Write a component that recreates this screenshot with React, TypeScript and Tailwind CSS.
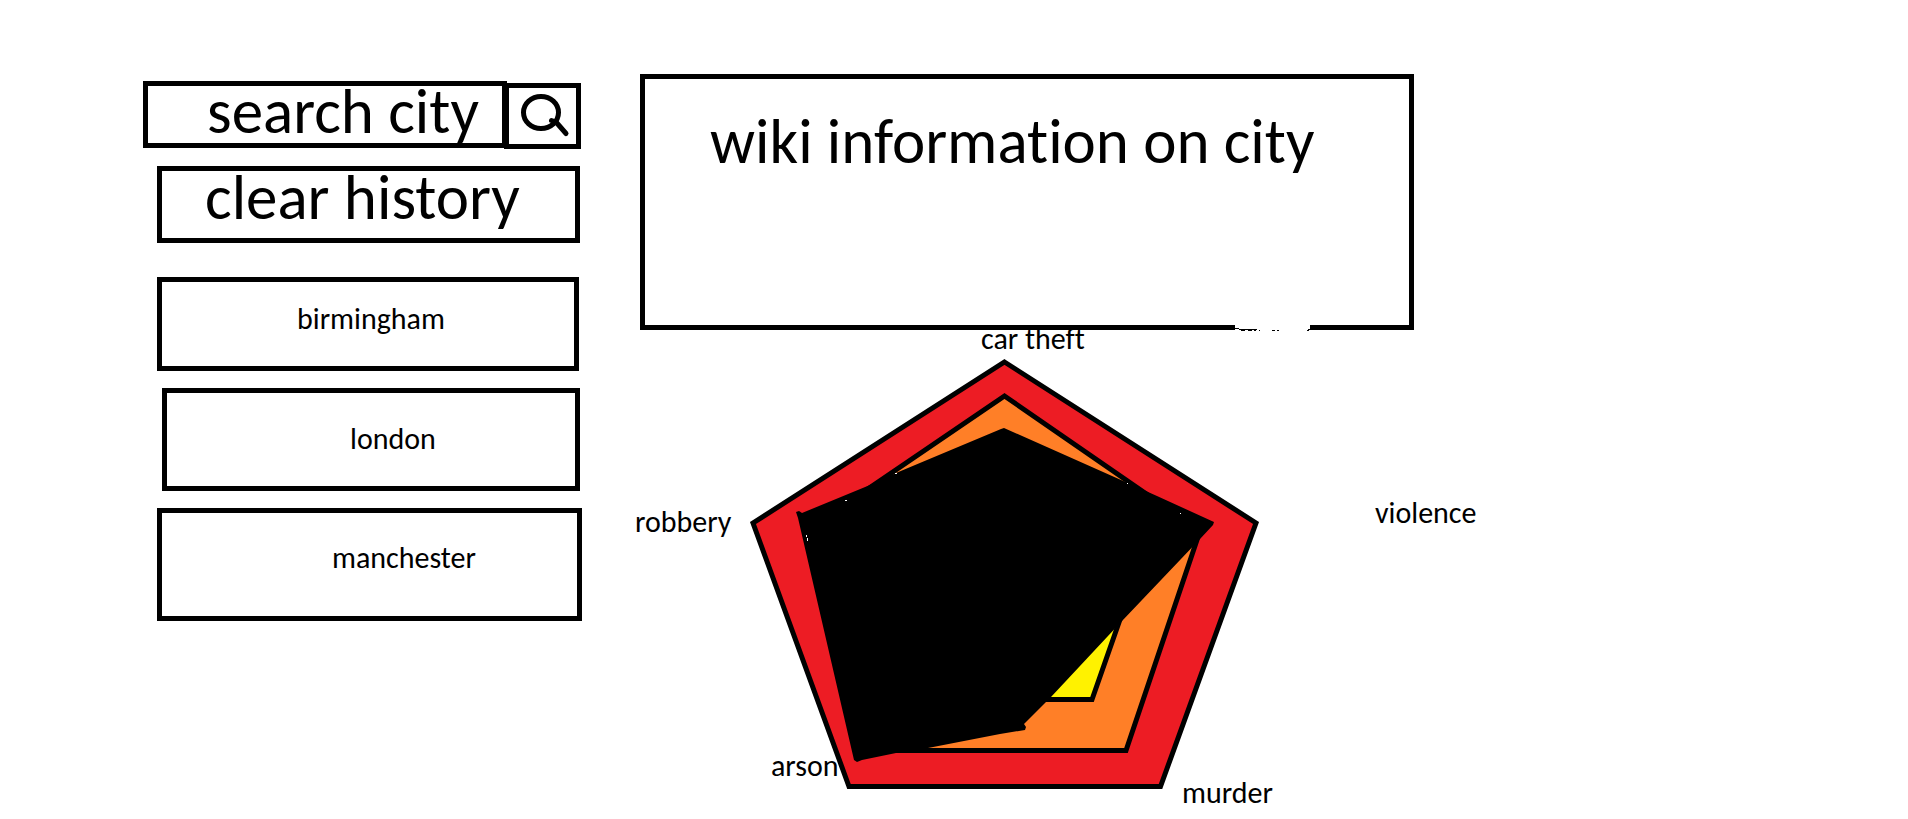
import { useState } from "react";

type City = { name: string; box: string };

const cities: City[] = [
  { name: "birmingham", box: "min-h-[94px] pt-[22px] pl-[135px] mr-[3px]" },
  { name: "london", box: "min-h-[103px] pt-[31px] pl-[183px] ml-[5px] mr-[2px]" },
  { name: "manchester", box: "min-h-[113px] pt-[30px] pl-[170px]" },
];

const labels = [
  { text: "car theft", x: 981, y: 349 },
  { text: "robbery", x: 635, y: 532 },
  { text: "violence", x: 1375, y: 523 },
  { text: "arson", x: 771, y: 776 },
  { text: "murder", x: 1182, y: 803 },
];

function SearchIcon() {
  return (
    <svg viewBox="0 0 67 56" className="h-[56px] w-[67px]" fill="none" stroke="#000" aria-hidden="true">
      <ellipse cx="32" cy="24.5" rx="17.5" ry="16" strokeWidth="5" />
      <path d="M42.500 32.500L47 34L57 45.500" strokeWidth="5" strokeLinecap="round" strokeLinejoin="round" />
    </svg>
  );
}

function CrimeChart() {
  return (
    <svg viewBox="640 330 774 489" className="block h-auto w-full overflow-visible" role="img" aria-label="Crime chart">
      <g stroke="#000" strokeWidth="5">
        <polygon points="1004.500,362 1256,523 1160.500,786.500 849,786.500 753,523" fill="#ed1c24" />
        <polygon points="1004.500,396 1200,531 1126,750.500 880,750.500 812,527" fill="#ff7f27" />
        <polygon points="1004,500 1124,608 1092,699.500 920,699.500 880,600" fill="#fff200" />
      </g>
      <path
        d="M1001 429L1004 428L1157 496L1214 522L1213 525L1200 539L1122 621L1051 697L1024 724L1026 727L1025 730L1000 734L928 748L896 753L862 760L857 762L854 760L798 518L796 512L799 511L802 513L870 485L896 473Z"
        fill="#000"
      />
      <path d="M845 500.500h2M895 473.500h2M806.500 535v2M807.500 538v3M1180 513.500h1M1127 483.500h1" stroke="#fff" />
      <g fontSize="30" fill="#000">
        {labels.map((l) => (
          <text key={l.text} x={l.x} y={l.y}>
            {l.text}
          </text>
        ))}
      </g>
    </svg>
  );
}

export default function App() {
  const [query, setQuery] = useState("search city");

  return (
    <main className="grid grid-cols-[minmax(0,143fr)_minmax(0,439fr)_minmax(0,58fr)_minmax(0,774fr)_minmax(0,494fr)] items-start bg-white font-[Calibri,Carlito,Lato,sans-serif] text-black [font-variant-ligatures:none]">
      <aside className="col-start-2 pt-[81px]">
        <form className="flex items-start" onSubmit={(e) => e.preventDefault()}>
          <input
            aria-label="search city"
            value={query}
            onChange={(e) => setQuery(e.target.value)}
            className="h-[67px] min-w-0 flex-1 border-[5px] border-black pb-[6px] pl-[59px] text-[63px] leading-[52px] outline-none"
          />
          <button
            type="submit"
            aria-label="search"
            className="-ml-[3px] mt-[2px] mr-px h-[66px] w-[77px] border-[5px] border-black bg-white"
          >
            <SearchIcon />
          </button>
        </form>
        <div className="pl-[14px]">
          <div className="mt-[17px] flex pr-[2px]">
            <button
              type="button"
              onClick={() => setQuery("")}
              className="flex h-[77px] flex-1 items-start border-[5px] border-black pt-px pl-[43px] text-[63px] leading-[52px] whitespace-nowrap"
            >
              clear history
            </button>
          </div>
          <ul className="mt-[34px] flex flex-col gap-[17px]">
            {cities.map((c) => (
              <li key={c.name} className="flex">
                <button
                  type="button"
                  className={`flex flex-1 items-start border-[5px] border-black text-[30px] leading-[30px] ${c.box}`}
                >
                  {c.name}
                </button>
              </li>
            ))}
          </ul>
        </div>
      </aside>
      <div className="col-start-4 pt-[74px]">
        <section className="relative min-h-[256px] border-[5px] border-black pt-[33px] pl-[65px]">
          <h1 className="text-[63px] leading-[60px] whitespace-nowrap">wiki information on city</h1>
          <svg viewBox="0 0 75 6" className="absolute right-[99px] -bottom-[6px] h-[6px] w-[75px]" aria-hidden="true">
            <path d="M0 0H75V6H0Z" fill="#fff" />
            <path d="M0 3.500H4M4 4.500H22M6 5.500H10M13 5.500H17M19 5.500H21M24 5.500H25M37 5.500H40M42 5.500H44M73 4.500H75M72 5.500H74" stroke="#000" />
          </svg>
        </section>
        <CrimeChart />
      </div>
    </main>
  );
}
